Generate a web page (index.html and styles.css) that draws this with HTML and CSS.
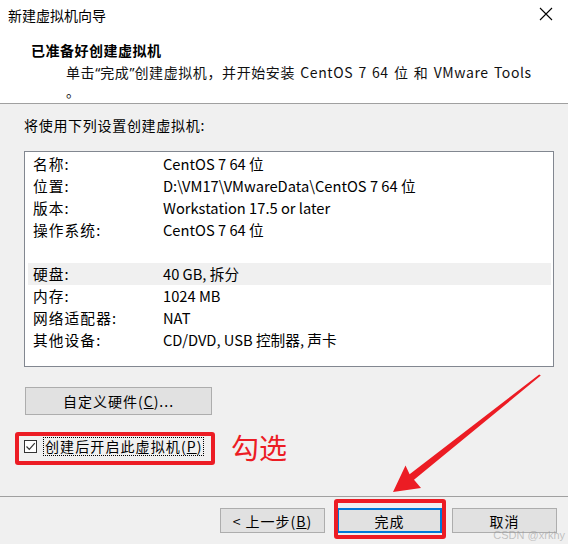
FILE: index.html
```html
<!DOCTYPE html>
<html lang="zh">
<head>
<meta charset="utf-8">
<title>新建虚拟机向导</title>
<link rel="stylesheet" href="styles.css">
</head>
<body>
<div class="dialog">
  <div class="titlebar">
    <span class="title">新建虚拟机向导</span>
    <svg class="close" width="14" height="14" viewBox="0 0 14 14"><path d="M1 1 L13 13 M13 1 L1 13" stroke="#000" stroke-width="1.1" fill="none"/></svg>
  </div>
  <div class="header">
    <div class="heading">已准备好创建虚拟机</div>
    <div class="subtitle">单击<span class="q">“</span>完成<span class="q">”</span>创建虚拟机，并开始安装 CentOS 7 64 位 和 VMware Tools<br>。</div>
  </div>
  <div class="body">
    <div class="intro">将使用下列设置创建虚拟机:</div>
    <div class="summary">
      <div class="row"><span class="label">名称:</span><span>CentOS 7 64 位</span></div>
      <div class="row"><span class="label">位置:</span><span>D:\VM17\VMwareData\CentOS 7 64 位</span></div>
      <div class="row"><span class="label">版本:</span><span>Workstation 17.5 or later</span></div>
      <div class="row"><span class="label">操作系统:</span><span>CentOS 7 64 位</span></div>
      <div class="row"><span class="label"></span><span></span></div>
      <div class="row selected"><span class="label">硬盘:</span><span>40 GB, 拆分</span></div>
      <div class="row"><span class="label">内存:</span><span>1024 MB</span></div>
      <div class="row"><span class="label">网络适配器:</span><span>NAT</span></div>
      <div class="row"><span class="label">其他设备:</span><span>CD/DVD, USB 控制器, 声卡</span></div>
    </div>
    <button class="btn custom">自定义硬件(<u>C</u>)...</button>
    <div class="check-row">
      <span class="checkbox"><svg width="11" height="11" viewBox="0 0 11 11"><path d="M1.5 5.5 L4.3 8.3 L9.8 2.2" stroke="#333" stroke-width="1.2" fill="none"/></svg></span>
      <span class="check-label">创建后开启此虚拟机(<u>P</u>)</span>
    </div>
  </div>
  <div class="footer">
    <button class="btn back">&lt; 上一步(<u>B</u>)</button>
    <button class="btn finish">完成</button>
    <button class="btn cancel">取消</button>
  </div>

  <div class="mark mark-check"></div>
  <div class="mark mark-finish"></div>
  <div class="note">勾选</div>
  <svg class="arrow" width="568" height="544" viewBox="0 0 568 544">
    <polygon points="539.2,374.4 409.6,474.3 405.5,465.5 393,492 421,488 414,479.7 540.8,375.6" fill="#ec1c24"/>
  </svg>
  <div class="watermark">CSDN @xrkhy</div>
</div>
</body>
</html>
```

FILE: styles.css
```css
html, body {
  margin: 0;
  padding: 0;
}
body {
  font-family: "Noto Sans CJK SC", "Noto Sans", sans-serif;
  font-size: 14px;
  color: #000;
  background: #f0f0f0;
}
.dialog {
  position: relative;
  width: 568px;
  height: 544px;
  overflow: hidden;
  background: #f0f0f0;
}
.titlebar {
  height: 29px;
  background: #fff;
  display: flex;
  align-items: center;
  justify-content: space-between;
  padding: 0 15px 0 8px;
}
.title {
  font-size: 14px;
  line-height: 20px;
}
.close {
  margin-top: -2px;
}
.header {
  background: #fff;
  padding: 11px 0 2px 31px;
  border-bottom: 1px solid #a0a0a0;
}
.heading {
  font-weight: bold;
  line-height: 20px;
  height: 20px;
  letter-spacing: 0.5px;
}
.subtitle {
  margin-top: 3px;
  padding-left: 35px;
  line-height: 19px;
  color: #111;
  letter-spacing: 0.6px;
  word-spacing: 1.5px;
}
.q {
  font-family: "Noto Sans", sans-serif;
  letter-spacing: 0;
}
.body {
  padding: 11px 14px 0 24px;
}
.intro {
  line-height: 20px;
  padding-left: 0;
  letter-spacing: 0.7px;
}
.summary {
  margin-top: 16px;
  height: 216px;
  box-sizing: border-box;
  background: #fff;
  border: 1px solid #828790;
  padding: 1px 2px 0 3px;
}
.row {
  display: grid;
  grid-template-columns: 130px 1fr;
  height: 22px;
  line-height: 22px;
  padding-left: 5px;
  font-size: 14.7px;
}
.label {
  letter-spacing: 1.1px;
}
.row.selected {
  background: #f0f0f0;
}
.btn {
  font-family: inherit;
  font-size: 14px;
  color: #000;
  background: #e1e1e1;
  border: 1px solid #adadad;
  padding: 0;
  margin: 0;
  box-sizing: border-box;
  letter-spacing: 1px;
}
.custom {
  display: block;
  margin: 20px 0 0 1px;
  width: 187px;
  height: 28px;
}
.check-row {
  display: flex;
  align-items: center;
  margin-top: 22px;
  height: 19px;
}
.checkbox {
  width: 13px;
  height: 13px;
  box-sizing: border-box;
  border: 1px solid #333;
  background: #fff;
  display: flex;
  align-items: center;
  justify-content: center;
  margin-right: 6px;
}
.check-label {
  border: 1px dotted #000;
  line-height: 17px;
  padding: 0 0 0 1px;
  letter-spacing: 1.1px;
}
.footer {
  position: absolute;
  left: 0;
  top: 496px;
  width: 100%;
  border-top: 1px solid #a0a0a0;
  padding: 11px 11px 0 0;
  box-sizing: border-box;
  display: flex;
  justify-content: flex-end;
}
.footer .btn {
  width: 105px;
  height: 25px;
}
.back {
  margin-right: 12px;
}
.finish {
  margin-right: 10px;
  border: 2px solid #0078d7;
}
.mark {
  position: absolute;
  border: 4px solid #ec1c24;
  border-radius: 3px;
  box-sizing: border-box;
}
.mark-check {
  left: 15px;
  top: 432px;
  width: 200px;
  height: 33px;
}
.mark-finish {
  left: 334px;
  top: 499px;
  width: 112px;
  height: 40px;
}
.note {
  position: absolute;
  left: 231px;
  top: 428px;
  font-size: 28px;
  line-height: 38px;
  color: #ec1c24;
}
.arrow {
  position: absolute;
  left: 0;
  top: 0;
  pointer-events: none;
}
.watermark {
  position: absolute;
  right: 3px;
  top: 529px;
  font-family: "Liberation Sans", sans-serif;
  font-size: 11px;
  line-height: 13px;
  color: rgba(150, 150, 150, 0.55);
}
```
